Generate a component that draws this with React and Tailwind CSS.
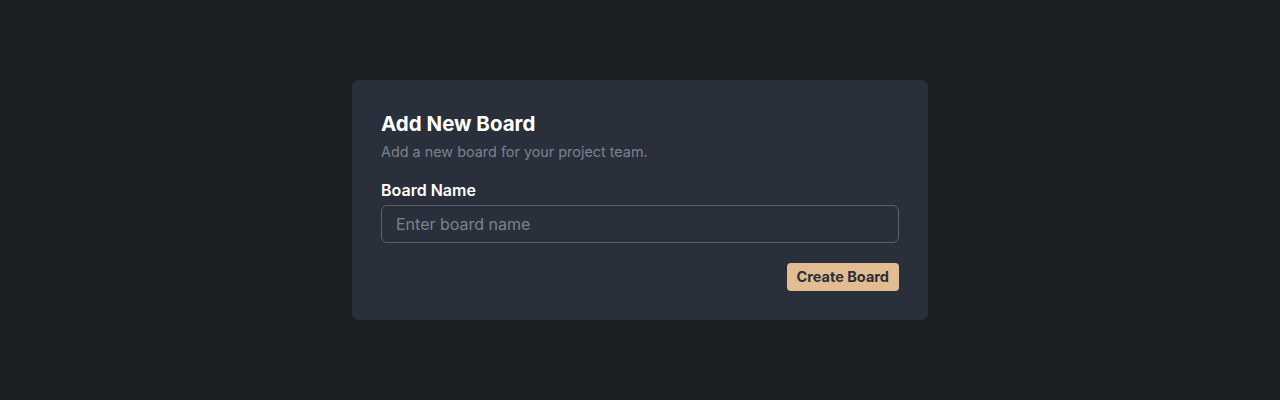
export default function App() {
  return (
    <div
      className="min-h-[400px] w-full bg-[#1b1e23] flex justify-center pt-20"
      style={{ fontFamily: 'Inter, "Noto Sans", sans-serif' }}
    >
      <div className="w-[576px] h-[240px] rounded-md border border-[#2a303a] bg-[#29303b] px-7 pt-[29px]">
        <h2 className="text-[20.5px] leading-7 font-bold text-white">Add New Board</h2>
        <p className="mt-1 text-[14.4px] leading-5 text-[#7c828c]">Add a new board for your project team.</p>

        <label htmlFor="boardName" className="mt-4 block text-base font-semibold text-white">
          Board Name
        </label>
        <input
          id="boardName"
          type="text"
          placeholder="Enter board name"
          className="mt-[3px] block w-full rounded-md border border-[#5a606b] bg-transparent px-3.5 py-1.5 text-base text-white placeholder-[#7c828c] outline-none"
        />

        <div className="mt-5 flex justify-end">
          <button
            type="button"
            className="rounded-[4px] bg-[#e3bc93] px-2.5 py-1 text-[14.5px] leading-5 font-bold text-[#2a2f37]"
          >
            Create Board
          </button>
        </div>
      </div>
    </div>
  );
}
